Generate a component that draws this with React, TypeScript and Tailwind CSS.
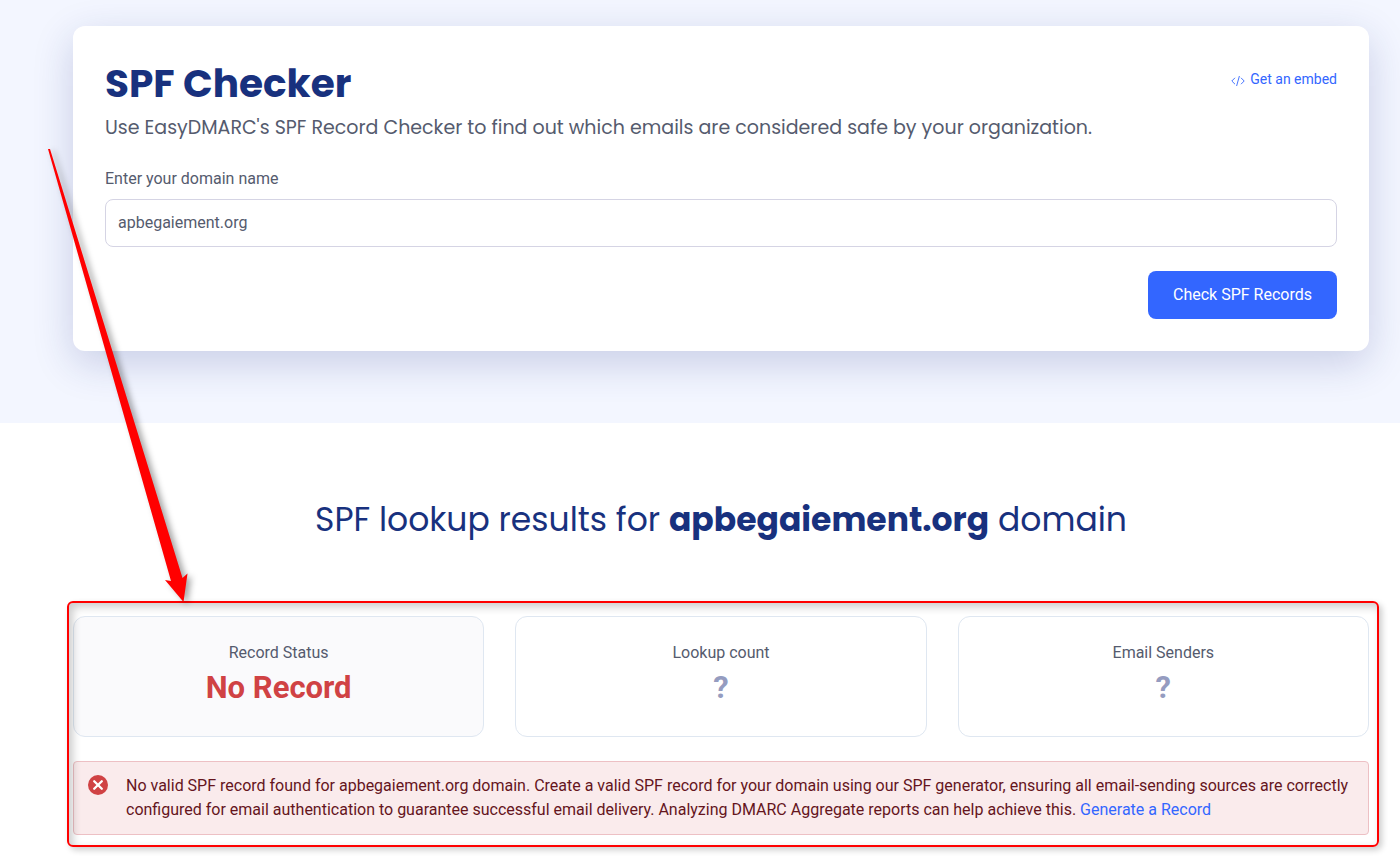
import { useState } from 'react';
import type { FormEvent } from 'react';

const STATS = [
  { label: 'Record Status', value: 'No Record', card: 'bg-[#fafafc]', color: 'text-[#d04244]' },
  { label: 'Lookup count', value: '?', card: 'bg-white', color: 'text-[#959cc0]' },
  { label: 'Email Senders', value: '?', card: 'bg-white', color: 'text-[#959cc0]' },
];

function CodeIcon() {
  return (
    <svg width="14" height="12" viewBox="0 0 14 12" fill="none" stroke="currentColor" strokeWidth="0.9" aria-hidden="true">
      <path d="M4 2.8 0.8 6 4 9.2M10 2.8 13.2 6 10 9.2M8.4 1 5.6 11" />
    </svg>
  );
}

function ErrorIcon() {
  return (
    <svg className="shrink-0" width="20" height="20" viewBox="0 0 20 20" aria-hidden="true">
      <circle cx="10" cy="10" r="10" fill="#d04244" />
      <path d="M6.2 6.2 13.8 13.8M13.8 6.2 6.2 13.8" stroke="#fff" strokeWidth="2.3" strokeLinecap="round" />
    </svg>
  );
}

// Red arrow pointing at the results
function Arrow() {
  return (
    <svg
      className="pointer-events-none absolute left-0 top-0 overflow-visible drop-shadow-[4px_2px_3px_rgba(0,0,0,0.35)]"
      width="200"
      height="610"
      viewBox="0 0 200 610"
      aria-hidden="true"
    >
      <path d="M48 149 50 149 182.5 578 187.5 573.5 183.5 602 165 580 171 581Z" fill="#ff0000" />
    </svg>
  );
}

export default function App() {
  const [domain, setDomain] = useState('apbegaiement.org');

  const handleSubmit = (e: FormEvent) => e.preventDefault();

  return (
    <div className="relative min-h-screen bg-white font-[Roboto,sans-serif] text-base text-[#555b6e]">
      {/* Checker */}
      <section className="bg-[#f3f6ff] pt-[26px] pr-[31px] pb-[72px] pl-[73px]">
        <div className="rounded-xl bg-white p-8 shadow-[0_12px_40px_rgba(30,45,130,0.2)]">
          <div className="flex items-start justify-between">
            <h1 className="font-[Poppins,Inter,sans-serif] text-[39px] leading-[51px] font-bold text-[#18317e]">SPF Checker</h1>
            <a href="#embed" className="mt-[11px] flex items-center gap-[5px] text-sm leading-5 text-[#3366ff]">
              <span className="pt-1"><CodeIcon /></span>
              Get an embed
            </a>
          </div>
          <p className="mt-1 font-[Poppins,Inter,sans-serif] text-[19px] leading-[30px]">
            Use EasyDMARC's SPF Record Checker to find out which emails are considered safe by your organization.
          </p>

          <form onSubmit={handleSubmit} className="mt-6 flex flex-col">
            <label htmlFor="domain" className="mb-2 leading-6">Enter your domain name</label>
            <input
              id="domain"
              type="text"
              value={domain}
              onChange={(e) => setDomain(e.target.value)}
              className="h-12 w-full rounded-lg border border-[#d5d4e4] bg-white px-3 pb-0.5 outline-none"
            />
            <button type="submit" className="mt-6 h-12 self-end rounded-lg bg-[#3366ff] px-[25px] text-white">
              Check SPF Records
            </button>
          </form>
        </div>
      </section>

      {/* Results */}
      <section className="pt-[72px] pr-[31px] pb-6 pl-[73px]">
        <h2 className="text-center font-[Poppins,Inter,sans-serif] text-[33px] leading-[50px] text-[#18317e]">
          SPF lookup results for <strong className="font-bold">apbegaiement.org</strong> domain
        </h2>

        <div className="relative mt-[71px]">
          <div className="grid grid-cols-3 gap-[31px]">
            {STATS.map((s) => (
              <div key={s.label} className={`rounded-xl border border-[#dfe7f1] pt-6 pb-[25px] text-center ${s.card}`}>
                <div className="leading-6">{s.label}</div>
                <div className={`text-[31px] leading-[46px] font-bold ${s.color}`}>{s.value}</div>
              </div>
            ))}
          </div>

          <div className="mt-6 flex gap-[18px] rounded border border-[#edc0c4] bg-[#faebec] py-3 pr-4 pl-[14px] leading-6 text-[#65151d]">
            <span className="pt-px"><ErrorIcon /></span>
            <p>
              No valid SPF record found for apbegaiement.org domain. Create a valid SPF record for your domain using our SPF
              generator, ensuring all email-sending sources are correctly configured for email authentication to guarantee
              successful email delivery. Analyzing DMARC Aggregate reports can help achieve this.{' '}
              <a href="#generate" className="text-[#3366ff]">Generate a Record</a>
            </p>
          </div>

          {/* Red frame over the results */}
          <div className="pointer-events-none absolute -top-[15px] -right-[10px] -bottom-3 -left-[6px] rounded-md border-2 border-[#ff0000] shadow-[3px_3px_6px_rgba(0,0,0,0.2),inset_4px_4px_8px_rgba(0,0,0,0.2)]" />
        </div>
      </section>

      <Arrow />
    </div>
  );
}
